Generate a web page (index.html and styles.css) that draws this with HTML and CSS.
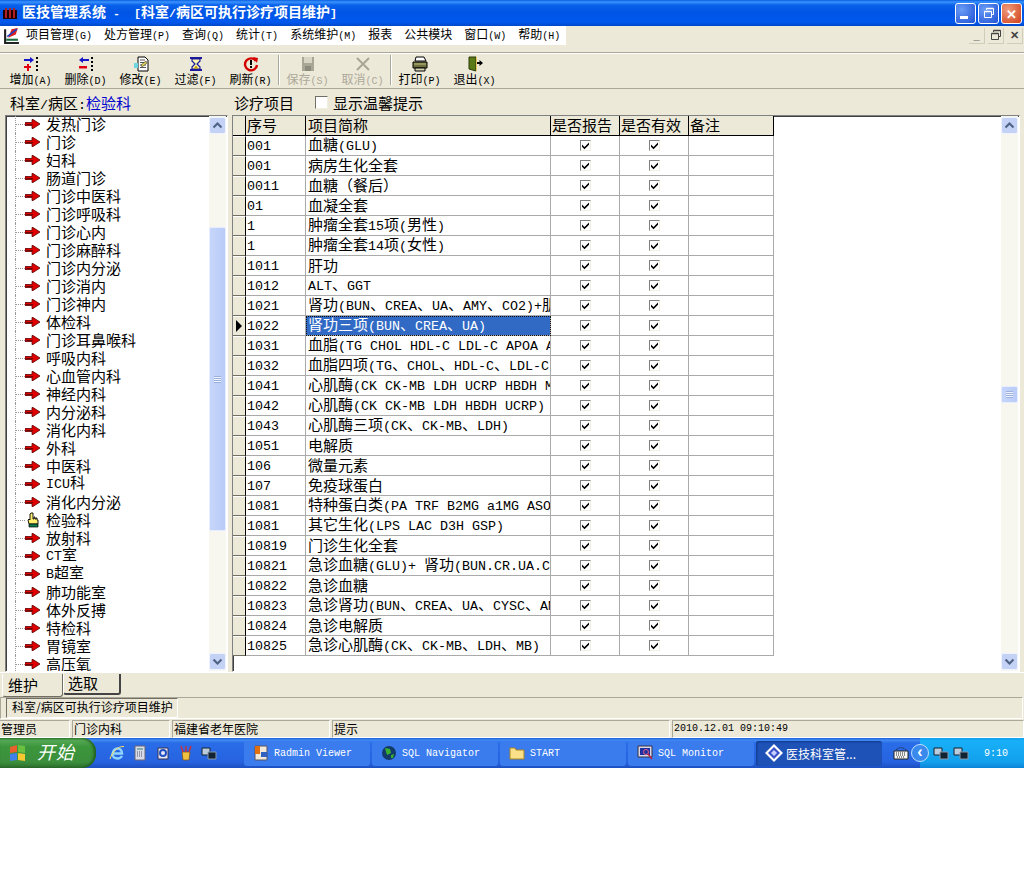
FILE: index.html
```html
<!DOCTYPE html>
<html lang="zh">
<head>
<meta charset="utf-8">
<title>医技管理系统</title>
<link rel="stylesheet" href="styles.css">
</head>
<body>
<svg class="sprite" aria-hidden="true">
  <symbol id="arrow" viewBox="0 0 16 12"><path d="M0 4.500h7V1.500l1 0 7 4.500-7 4.500-1 0V7.500H0z" fill="#e00000" stroke="#5a0000" stroke-width=".8"/><path d="M1 6.500h7" stroke="#700" stroke-width="1"/></symbol>
  <symbol id="hand" viewBox="0 0 14 16"><path d="M5 1h2v6h1V5h1v2h1V6h1v2h1v4H3l-1-4 1-1 1 1V2z" fill="#ffef70" stroke="#000" stroke-width=".9"/><path d="M3 12h9v3H3z" fill="#0a7a4a" stroke="#000" stroke-width=".7"/></symbol>
  <symbol id="check" viewBox="0 0 9 9"><path d="M1 3.500l2.500 2.500L8 1.500v2.200L3.500 8.200 1 5.700z" fill="#000"/></symbol>
  <symbol id="up" viewBox="0 0 17 17"><rect x=".5" y=".5" width="16" height="16" rx="2" fill="#c3d2f5" stroke="#eef3ff"/><path d="M4.500 10.500L8.500 6.500l4 4" fill="none" stroke="#4d6185" stroke-width="2"/></symbol>
  <symbol id="down" viewBox="0 0 17 17"><rect x=".5" y=".5" width="16" height="16" rx="2" fill="#c3d2f5" stroke="#eef3ff"/><path d="M4.500 6.500l4 4 4-4" fill="none" stroke="#4d6185" stroke-width="2"/></symbol>
  <symbol id="add" viewBox="0 0 16 16"><path d="M1 3h6V1l4 3-4 3V5H1z" fill="#1414c8"/><path d="M4 8h2v2h2v2H6v3H4v-3H1v-2h3z" fill="#e00010"/><path d="M13 1h2v2h-2zM13 5h2v2h-2zM13 9h2v2h-2zM13 13h2v2h-2z" fill="#000"/></symbol>
  <symbol id="del" viewBox="0 0 16 16"><path d="M11 3H5V1L1 4l4 3V5h6z" fill="#1414c8"/><path d="M1 10h8v2.500H1z" fill="#e00010"/><path d="M13 1h2v2h-2zM13 5h2v2h-2zM13 9h2v2h-2zM13 13h2v2h-2z" fill="#000"/></symbol>
  <symbol id="edit" viewBox="0 0 16 16"><path d="M5 1h7l3 3v11H5z" fill="#fff" stroke="#000"/><path d="M7 4h5M7 6.500h6M7 9h6M7 11.500h6" stroke="#555"/><path d="M1 7h4v5H1z" fill="#6fd6e0"/><path d="M8 9l5-4 1 2-5 4z" fill="#e8d850" stroke="#333" stroke-width=".6"/></symbol>
  <symbol id="filter" viewBox="0 0 16 16"><path d="M2 1h12v2H2zM2 13h12v2H2z" fill="#1a1a9a"/><path d="M4 3h8v2L9 8l3 3v2H4v-2l3-3-3-3z" fill="#fff8b0" stroke="#1a1a9a" stroke-width="1.200"/><path d="M5.500 12.500L8 9.500l2.500 3z" fill="#c8a000"/></symbol>
  <symbol id="refresh" viewBox="0 0 16 16"><path d="M13 5A6 6 0 1 0 14 9" fill="none" stroke="#d40000" stroke-width="2.400"/><path d="M10 1l5 1-1 5z" fill="#d40000"/><path d="M7 4h2v5H7zM7 10h2v2H7z" fill="#000"/></symbol>
  <symbol id="save" viewBox="0 0 16 16"><path d="M2 1h12v14H2z" fill="#a8a695"/><path d="M4 1h8v6H4z" fill="#d8d5c4"/><path d="M5 10h6v5H5z" fill="#8c8a7c"/></symbol>
  <symbol id="cancel" viewBox="0 0 16 16"><path d="M2 2l12 12M14 2L2 14" stroke="#a8a695" stroke-width="2"/></symbol>
  <symbol id="print" viewBox="0 0 16 16"><path d="M4 1h8l2 4H3z" fill="#fff" stroke="#000"/><path d="M1 6h14v6H1z" fill="#6e7040" stroke="#000"/><path d="M3 12h10v3H3z" fill="#d9d6b8" stroke="#000"/><path d="M2 8h12" stroke="#c0c080"/></symbol>
  <symbol id="exit" viewBox="0 0 16 16"><path d="M2 1h7v14l-7-2z" fill="#5b7a18" stroke="#2c3a08"/><path d="M9 1h1v14H9z" fill="#e8c860"/><path d="M10 6h2.500V4L16 7l-3.500 3V8H10z" fill="#000"/></symbol>
  <symbol id="appicon" viewBox="0 0 14 14"><path d="M0 4h14v9H0z" fill="#200"/><path d="M2 2h2v10H2zM6 2h2v10H6zM10 2h2v10h-2z" fill="#b02020"/></symbol>
  <symbol id="menuicon" viewBox="0 0 16 16"><path d="M1 2h2v12h12v2H1z" fill="#222"/><path d="M3 11h11v2H3z" fill="#1c6a3c"/><path d="M5 10l3-8 6-1-2 6z" fill="#e02020"/><path d="M4 9l9-7" stroke="#2040c0" stroke-width="1.500"/></symbol>
  <symbol id="restore" viewBox="0 0 12 12"><path d="M3.500 3V1.500h7v6H9" fill="none" stroke="currentColor"/><path d="M3.500 1.500h7" stroke="currentColor" stroke-width="1.500"/><path d="M1.500 4.500h7v6h-7z" fill="none" stroke="currentColor"/><path d="M1.500 4.500h7" stroke="currentColor" stroke-width="1.500"/></symbol>
  <symbol id="ie" viewBox="0 0 16 16"><path d="M3.500 8.500h9.500C13 5.500 11 3.500 8.500 3.500S3.500 6 3.500 9s2 4.500 5 4.500c2 0 3.500-.8 4.500-2.500" fill="none" stroke="#8fd4ff" stroke-width="2.400"/><path d="M1 14C3 7 9 1 15 1.500" fill="none" stroke="#ffe060" stroke-width="1"/></symbol>
  <symbol id="calc" viewBox="0 0 16 16"><path d="M3 1h10v14H3z" fill="#d8dce8" stroke="#667"/><path d="M5 3h6v2H5z" fill="#8aa"/><path d="M5 7h6M5 9h6M5 11h6" stroke="#556" stroke-dasharray="1 1"/></symbol>
  <symbol id="pencil" viewBox="0 0 16 16"><path d="M3 3h10v11H3z" fill="#e8e8f8" stroke="#335"/><circle cx="8" cy="8" r="3" fill="none" stroke="#2050c0" stroke-width="2"/></symbol>
  <symbol id="cup" viewBox="0 0 16 16"><path d="M4 7h8l-1 8H5z" fill="#f0c040" stroke="#805010" stroke-width=".7"/><path d="M5 7L3 1M8 7V1M11 7l2-6" stroke="#d03030" stroke-width="1.400"/></symbol>
  <symbol id="net" viewBox="0 0 16 16"><path d="M1 3h8v7H1z" fill="#bcd" stroke="#123"/><path d="M7 7h8v7H7z" fill="#123" stroke="#89a"/></symbol>
  <symbol id="radmin" viewBox="0 0 16 16"><path d="M2 1h12v14H2z" fill="#f0e8d8" stroke="#556"/><path d="M2 1h5v8H2z" fill="#e07010"/><path d="M8 7h6v5H8z" fill="#3060c0"/></symbol>
  <symbol id="globe" viewBox="0 0 16 16"><circle cx="8" cy="8" r="7" fill="#123a6a"/><path d="M4 3l5 1 1 4-4 2-1-3zM10 10l3-1-1 4-2 0z" fill="#38b030"/></symbol>
  <symbol id="folder" viewBox="0 0 16 16"><path d="M1 3h5l1 2h8v9H1z" fill="#fbe08a" stroke="#a88420"/></symbol>
  <symbol id="monitor" viewBox="0 0 16 16"><path d="M1 1h14v11H1z" fill="#d8d8e8" stroke="#334"/><path d="M3 3h10v7H3z" fill="#2030a0"/><circle cx="9" cy="7" r="2.500" fill="none" stroke="#e06080"/><path d="M11 9l4 5" stroke="#c02040" stroke-width="1.500"/></symbol>
  <symbol id="diamond" viewBox="0 0 18 18"><path d="M9 0l9 9-9 9-9-9z" fill="#fff"/><path d="M9 3l6 6-6 6-6-6z" fill="#3a50c8"/><path d="M9 6l3 3-3 3-3-3z" fill="#c8d0ff"/></symbol>
  <symbol id="kbd" viewBox="0 0 16 16"><path d="M1 6h14v8H1z" fill="#f4f4f4" stroke="#222"/><path d="M3 8h10M3 10h10M4 12h8" stroke="#222" stroke-dasharray="1 1"/><path d="M3 5c2-3 8-3 10 0" fill="none" stroke="#222" stroke-dasharray="1 1"/></symbol>
  <symbol id="flag" viewBox="0 0 18 18"><path d="M1 3l7-2v7l-7 1z" fill="#e8602c"/><path d="M9 1l7 1v7l-7-1z" fill="#6cc040"/><path d="M1 10l7-1v7l-7 1z" fill="#4080e8"/><path d="M9 9l7 1v7l-7-1z" fill="#f8c830"/></symbol>
</svg>

<div class="app">
  <header class="titlebar">
    <svg class="i14"><use href="#appicon"/></svg>
    <h1 class="title">医技管理系统<span class="tm"> -  [</span>科室<span class="tm">/</span>病区可执行诊疗项目维护<span class="tm">]</span></h1>
    <div class="winbtns">
      <button class="wb"><span class="wb-min"></span></button>
      <button class="wb"><svg class="i12"><use href="#restore"/></svg></button>
      <button class="wb wb-close">✕</button>
    </div>
  </header>

  <nav class="menubar">
    <div class="menustrip">
      <svg class="menuicon"><use href="#menuicon"/></svg>
      <span class="mi">项目管理<small>(G)</small></span>
      <span class="mi">处方管理<small>(P)</small></span>
      <span class="mi">查询<small>(Q)</small></span>
      <span class="mi">统计<small>(T)</small></span>
      <span class="mi">系统维护<small>(M)</small></span>
      <span class="mi">报表</span>
      <span class="mi">公共模块</span>
      <span class="mi">窗口<small>(W)</small></span>
      <span class="mi">帮助<small>(H)</small></span>
    </div>
    <div class="mdibtns">
      <span class="mdi">_</span><span class="mdi"><svg class="i12"><use href="#restore"/></svg></span><span class="mdi">✕</span>
    </div>
  </nav>

  <div class="band"></div>
  <div class="toolbar">
    <button class="tb"><svg class="i16"><use href="#add"/></svg><span>增加<small>(A)</small></span></button>
    <button class="tb"><svg class="i16"><use href="#del"/></svg><span>删除<small>(D)</small></span></button>
    <button class="tb"><svg class="i16"><use href="#edit"/></svg><span>修改<small>(E)</small></span></button>
    <button class="tb"><svg class="i16"><use href="#filter"/></svg><span>过滤<small>(F)</small></span></button>
    <button class="tb"><svg class="i16"><use href="#refresh"/></svg><span>刷新<small>(R)</small></span></button>
    <i class="sep"></i>
    <button class="tb off"><svg class="i16"><use href="#save"/></svg><span>保存<small>(S)</small></span></button>
    <button class="tb off"><svg class="i16"><use href="#cancel"/></svg><span>取消<small>(C)</small></span></button>
    <i class="sep"></i>
    <button class="tb"><svg class="i16"><use href="#print"/></svg><span>打印<small>(P)</small></span></button>
    <button class="tb"><svg class="i16"><use href="#exit"/></svg><span>退出<small>(X)</small></span></button>
  </div>

  <div class="labels">
    <div class="lab-left">科室<span class="m">/</span>病区<span class="m">:</span><b class="cur">检验科</b></div>
    <div class="lab-right">诊疗项目<i class="cb0"></i>显示温馨提示</div>
  </div>

  <main class="panes">
    <section class="tree">
      <ul class="nodes">
        <li><i class="stem"></i><svg class="arr"><use href="#arrow"/></svg>发热门诊</li>
        <li><i class="stem"></i><svg class="arr"><use href="#arrow"/></svg>门诊</li>
        <li><i class="stem"></i><svg class="arr"><use href="#arrow"/></svg>妇科</li>
        <li><i class="stem"></i><svg class="arr"><use href="#arrow"/></svg>肠道门诊</li>
        <li><i class="stem"></i><svg class="arr"><use href="#arrow"/></svg>门诊中医科</li>
        <li><i class="stem"></i><svg class="arr"><use href="#arrow"/></svg>门诊呼吸科</li>
        <li><i class="stem"></i><svg class="arr"><use href="#arrow"/></svg>门诊心内</li>
        <li><i class="stem"></i><svg class="arr"><use href="#arrow"/></svg>门诊麻醉科</li>
        <li><i class="stem"></i><svg class="arr"><use href="#arrow"/></svg>门诊内分泌</li>
        <li><i class="stem"></i><svg class="arr"><use href="#arrow"/></svg>门诊消内</li>
        <li><i class="stem"></i><svg class="arr"><use href="#arrow"/></svg>门诊神内</li>
        <li><i class="stem"></i><svg class="arr"><use href="#arrow"/></svg>体检科</li>
        <li><i class="stem"></i><svg class="arr"><use href="#arrow"/></svg>门诊耳鼻喉科</li>
        <li><i class="stem"></i><svg class="arr"><use href="#arrow"/></svg>呼吸内科</li>
        <li><i class="stem"></i><svg class="arr"><use href="#arrow"/></svg>心血管内科</li>
        <li><i class="stem"></i><svg class="arr"><use href="#arrow"/></svg>神经内科</li>
        <li><i class="stem"></i><svg class="arr"><use href="#arrow"/></svg>内分泌科</li>
        <li><i class="stem"></i><svg class="arr"><use href="#arrow"/></svg>消化内科</li>
        <li><i class="stem"></i><svg class="arr"><use href="#arrow"/></svg>外科</li>
        <li><i class="stem"></i><svg class="arr"><use href="#arrow"/></svg>中医科</li>
        <li><i class="stem"></i><svg class="arr"><use href="#arrow"/></svg><span><span class="m">ICU</span>科</span></li>
        <li><i class="stem"></i><svg class="arr"><use href="#arrow"/></svg>消化内分泌</li>
        <li><i class="stem"></i><svg class="handi"><use href="#hand"/></svg>检验科</li>
        <li><i class="stem"></i><svg class="arr"><use href="#arrow"/></svg>放射科</li>
        <li><i class="stem"></i><svg class="arr"><use href="#arrow"/></svg><span><span class="m">CT</span>室</span></li>
        <li><i class="stem"></i><svg class="arr"><use href="#arrow"/></svg><span><span class="m">B</span>超室</span></li>
        <li><i class="stem"></i><svg class="arr"><use href="#arrow"/></svg>肺功能室</li>
        <li><i class="stem"></i><svg class="arr"><use href="#arrow"/></svg>体外反搏</li>
        <li><i class="stem"></i><svg class="arr"><use href="#arrow"/></svg>特检科</li>
        <li><i class="stem"></i><svg class="arr"><use href="#arrow"/></svg>胃镜室</li>
        <li><i class="stem"></i><svg class="arr"><use href="#arrow"/></svg>高压氧</li>
      </ul>
      <div class="vscroll">
        <svg class="sb"><use href="#up"/></svg>
        <div class="track"><div class="thumb thumb-tree"><span class="grip"></span></div></div>
        <svg class="sb"><use href="#down"/></svg>
      </div>
    </section>

    <section class="gridbox">
      <div class="gridwrap">
      <table class="grid">
        <colgroup><col class="c0"><col class="c1"><col class="c2"><col class="c3"><col class="c3"><col class="c4"></colgroup>
        <thead><tr><th></th><th>序号</th><th>项目简称</th><th>是否报告</th><th>是否有效</th><th>备注</th></tr></thead>
        <tbody>
          <tr><th></th><td class="m">001</td><td>血糖<span class="m">(GLU)</span></td><td class="ck"><i class="cb"><svg><use href="#check"/></svg></i></td><td class="ck"><i class="cb"><svg><use href="#check"/></svg></i></td><td></td></tr>
          <tr><th></th><td class="m">001</td><td>病房生化全套</td><td class="ck"><i class="cb"><svg><use href="#check"/></svg></i></td><td class="ck"><i class="cb"><svg><use href="#check"/></svg></i></td><td></td></tr>
          <tr><th></th><td class="m">0011</td><td>血糖（餐后）</td><td class="ck"><i class="cb"><svg><use href="#check"/></svg></i></td><td class="ck"><i class="cb"><svg><use href="#check"/></svg></i></td><td></td></tr>
          <tr><th></th><td class="m">01</td><td>血凝全套</td><td class="ck"><i class="cb"><svg><use href="#check"/></svg></i></td><td class="ck"><i class="cb"><svg><use href="#check"/></svg></i></td><td></td></tr>
          <tr><th></th><td class="m">1</td><td>肿瘤全套<span class="m">15</span>项<span class="m">(</span>男性<span class="m">)</span></td><td class="ck"><i class="cb"><svg><use href="#check"/></svg></i></td><td class="ck"><i class="cb"><svg><use href="#check"/></svg></i></td><td></td></tr>
          <tr><th></th><td class="m">1</td><td>肿瘤全套<span class="m">14</span>项<span class="m">(</span>女性<span class="m">)</span></td><td class="ck"><i class="cb"><svg><use href="#check"/></svg></i></td><td class="ck"><i class="cb"><svg><use href="#check"/></svg></i></td><td></td></tr>
          <tr><th></th><td class="m">1011</td><td>肝功</td><td class="ck"><i class="cb"><svg><use href="#check"/></svg></i></td><td class="ck"><i class="cb"><svg><use href="#check"/></svg></i></td><td></td></tr>
          <tr><th></th><td class="m">1012</td><td><span class="m">ALT</span>、<span class="m">GGT</span></td><td class="ck"><i class="cb"><svg><use href="#check"/></svg></i></td><td class="ck"><i class="cb"><svg><use href="#check"/></svg></i></td><td></td></tr>
          <tr><th></th><td class="m">1021</td><td>肾功<span class="m">(BUN</span>、<span class="m">CREA</span>、<span class="m">UA</span>、<span class="m">AMY</span>、<span class="m">CO2)+</span>肌酐</td><td class="ck"><i class="cb"><svg><use href="#check"/></svg></i></td><td class="ck"><i class="cb"><svg><use href="#check"/></svg></i></td><td></td></tr>
          <tr><th class="ind"><i class="tri"></i></th><td class="m">1022</td><td class="sel">肾功三项<span class="m">(BUN</span>、<span class="m">CREA</span>、<span class="m">UA)</span></td><td class="ck"><i class="cb"><svg><use href="#check"/></svg></i></td><td class="ck"><i class="cb"><svg><use href="#check"/></svg></i></td><td></td></tr>
          <tr><th></th><td class="m">1031</td><td>血脂<span class="m">(TG CHOL HDL-C LDL-C APOA APOB)</span></td><td class="ck"><i class="cb"><svg><use href="#check"/></svg></i></td><td class="ck"><i class="cb"><svg><use href="#check"/></svg></i></td><td></td></tr>
          <tr><th></th><td class="m">1032</td><td>血脂四项<span class="m">(TG</span>、<span class="m">CHOL</span>、<span class="m">HDL-C</span>、<span class="m">LDL-C)</span></td><td class="ck"><i class="cb"><svg><use href="#check"/></svg></i></td><td class="ck"><i class="cb"><svg><use href="#check"/></svg></i></td><td></td></tr>
          <tr><th></th><td class="m">1041</td><td>心肌酶<span class="m">(CK CK-MB LDH UCRP HBDH MB)</span></td><td class="ck"><i class="cb"><svg><use href="#check"/></svg></i></td><td class="ck"><i class="cb"><svg><use href="#check"/></svg></i></td><td></td></tr>
          <tr><th></th><td class="m">1042</td><td>心肌酶<span class="m">(CK CK-MB LDH HBDH UCRP)</span></td><td class="ck"><i class="cb"><svg><use href="#check"/></svg></i></td><td class="ck"><i class="cb"><svg><use href="#check"/></svg></i></td><td></td></tr>
          <tr><th></th><td class="m">1043</td><td>心肌酶三项<span class="m">(CK</span>、<span class="m">CK-MB</span>、<span class="m">LDH)</span></td><td class="ck"><i class="cb"><svg><use href="#check"/></svg></i></td><td class="ck"><i class="cb"><svg><use href="#check"/></svg></i></td><td></td></tr>
          <tr><th></th><td class="m">1051</td><td>电解质</td><td class="ck"><i class="cb"><svg><use href="#check"/></svg></i></td><td class="ck"><i class="cb"><svg><use href="#check"/></svg></i></td><td></td></tr>
          <tr><th></th><td class="m">106</td><td>微量元素</td><td class="ck"><i class="cb"><svg><use href="#check"/></svg></i></td><td class="ck"><i class="cb"><svg><use href="#check"/></svg></i></td><td></td></tr>
          <tr><th></th><td class="m">107</td><td>免疫球蛋白</td><td class="ck"><i class="cb"><svg><use href="#check"/></svg></i></td><td class="ck"><i class="cb"><svg><use href="#check"/></svg></i></td><td></td></tr>
          <tr><th></th><td class="m">1081</td><td>特种蛋白类<span class="m">(PA TRF B2MG a1MG ASO)</span></td><td class="ck"><i class="cb"><svg><use href="#check"/></svg></i></td><td class="ck"><i class="cb"><svg><use href="#check"/></svg></i></td><td></td></tr>
          <tr><th></th><td class="m">1081</td><td>其它生化<span class="m">(LPS LAC D3H GSP)</span></td><td class="ck"><i class="cb"><svg><use href="#check"/></svg></i></td><td class="ck"><i class="cb"><svg><use href="#check"/></svg></i></td><td></td></tr>
          <tr><th></th><td class="m">10819</td><td>门诊生化全套</td><td class="ck"><i class="cb"><svg><use href="#check"/></svg></i></td><td class="ck"><i class="cb"><svg><use href="#check"/></svg></i></td><td></td></tr>
          <tr><th></th><td class="m">10821</td><td>急诊血糖<span class="m">(GLU)+ </span>肾功<span class="m">(BUN.CR.UA.CO2)</span></td><td class="ck"><i class="cb"><svg><use href="#check"/></svg></i></td><td class="ck"><i class="cb"><svg><use href="#check"/></svg></i></td><td></td></tr>
          <tr><th></th><td class="m">10822</td><td>急诊血糖</td><td class="ck"><i class="cb"><svg><use href="#check"/></svg></i></td><td class="ck"><i class="cb"><svg><use href="#check"/></svg></i></td><td></td></tr>
          <tr><th></th><td class="m">10823</td><td>急诊肾功<span class="m">(BUN</span>、<span class="m">CREA</span>、<span class="m">UA</span>、<span class="m">CYSC</span>、<span class="m">AMY)</span></td><td class="ck"><i class="cb"><svg><use href="#check"/></svg></i></td><td class="ck"><i class="cb"><svg><use href="#check"/></svg></i></td><td></td></tr>
          <tr><th></th><td class="m">10824</td><td>急诊电解质</td><td class="ck"><i class="cb"><svg><use href="#check"/></svg></i></td><td class="ck"><i class="cb"><svg><use href="#check"/></svg></i></td><td></td></tr>
          <tr><th></th><td class="m">10825</td><td>急诊心肌酶<span class="m">(CK</span>、<span class="m">CK-MB</span>、<span class="m">LDH</span>、<span class="m">MB)</span></td><td class="ck"><i class="cb"><svg><use href="#check"/></svg></i></td><td class="ck"><i class="cb"><svg><use href="#check"/></svg></i></td><td></td></tr>
        </tbody>
      </table>
      </div>
      <div class="vscroll">
        <svg class="sb"><use href="#up"/></svg>
        <div class="track"><div class="thumb thumb-grid"><span class="grip"></span></div></div>
        <svg class="sb"><use href="#down"/></svg>
      </div>
    </section>
  </main>

  <div class="tabs">
    <span class="tab tab-on">维护</span>
    <span class="tab tab-off">选取</span>
  </div>

  <div class="formbar"><span class="formtab">科室/病区可执行诊疗项目维护</span></div>

  <footer class="status">
    <span class="st st1">管理员</span>
    <span class="st st2">门诊内科</span>
    <span class="st st3">福建省老年医院</span>
    <span class="st st4">提示</span>
    <span class="st st5">2010.12.01 09:10:49</span>
  </footer>

  <div class="taskbar">
    <div class="start"><svg class="flag"><use href="#flag"/></svg><em>开始</em></div>
    <div class="quick">
      <svg class="i16"><use href="#ie"/></svg>
      <svg class="i16"><use href="#calc"/></svg>
      <svg class="i16"><use href="#pencil"/></svg>
      <svg class="i16"><use href="#cup"/></svg>
      <svg class="i16"><use href="#net"/></svg>
    </div>
    <div class="tasks">
      <span class="task"><svg class="i16"><use href="#radmin"/></svg>Radmin Viewer</span>
      <span class="task"><svg class="i16"><use href="#globe"/></svg>SQL Navigator</span>
      <span class="task"><svg class="i16"><use href="#folder"/></svg>START</span>
      <span class="task"><svg class="i16"><use href="#monitor"/></svg>SQL Monitor</span>
      <span class="task task-on"><svg class="i18"><use href="#diamond"/></svg>医技科室管...</span>
    </div>
    <svg class="kbd"><use href="#kbd"/></svg>
    <div class="tray">
      <span class="chev">‹</span>
      <svg class="i16"><use href="#net"/></svg>
      <svg class="i16"><use href="#net"/></svg>
      <span class="clock">9:10</span>
    </div>
  </div>
</div>
</body>
</html>
```
FILE: styles.css
```css
* { box-sizing: border-box; }
html, body { margin: 0; padding: 0; background: #fff; }
body { font: 15px "Noto Sans CJK SC", sans-serif; color: #000; }
.sprite { display: none; }
svg { display: block; flex: none; }
button { font: inherit; padding: 0; border: 0; background: none; color: inherit; }
ul { list-style: none; margin: 0; padding: 0; }
small { font: 10px/1 "Liberation Mono", monospace; }
i, em { font-style: normal; }
.m { font-family: "Liberation Mono", monospace; font-size: 13.33px; line-height: 1; }

.i12 { width: 12px; height: 12px; }
.i14 { width: 14px; height: 14px; }
.i16 { width: 16px; height: 16px; }
.i18 { width: 18px; height: 18px; }

.app { width: 1024px; height: 768px; background: #ece9d8; display: flex; flex-direction: column; overflow: hidden; }

.titlebar {
  height: 26px; flex: none; display: flex; align-items: center; padding: 0 2px 0 3px;
  background: linear-gradient(#0a5ee0 0, #3a93ff 2px, #0a62ea 5px, #0055e5 12px, #0058ee 22px, #0048c8 26px);
}
.title { margin: 0 0 0 5px; font-size: 14px; font-weight: 700; color: #fff; white-space: pre; flex: 1; line-height: 22px; height: 26px; }
.tm { font: 700 11.67px/1 "Liberation Mono", monospace; }
.winbtns { display: flex; gap: 2px; }
.wb { width: 21px; height: 21px; border: 1px solid #fff; border-radius: 3px; background: radial-gradient(circle at 30% 30%, #6a9cf5, #1f51d6); color: #fff; display: flex; align-items: center; justify-content: center; }
.wb-close { background: radial-gradient(circle at 30% 30%, #f09a7a, #d0401a); font-size: 13px; font-weight: 700; }
.wb-min { width: 8px; height: 3px; background: #fff; margin-top: 8px; margin-right: 4px; }

.menubar { height: 19px; flex: none; display: flex; justify-content: space-between; }
.menustrip { display: flex; align-items: center; background: #fff; height: 19px; width: 566px; padding-left: 20px; }
.menuicon { width: 17px; height: 17px; margin-left: -17px; }
.mi { font-size: 12px; padding: 0 6px 4px; white-space: nowrap; line-height: 15px; }
.mdibtns { display: flex; gap: 3px; padding-right: 1px; align-items: center; }
.mdi { width: 16px; height: 16px; font: 700 11px/14px "Liberation Sans", sans-serif; color: #444; display: flex; align-items: center; justify-content: center; border-right: 1px solid #d0cdbb; border-bottom: 1px solid #d0cdbb; }

.band { height: 8px; flex: none; border-bottom: 1px solid #aca899; }
.toolbar { height: 36px; flex: none; display: flex; padding-left: 3px; border-top: 1px solid #fff; border-bottom: 1px solid #aca899; }
.tb { width: 55px; display: flex; flex-direction: column; align-items: center; font-size: 12px; line-height: 14px; padding-top: 2px; }
.tb span { white-space: nowrap; }
.tb.off { color: #aca899; }
.sep { width: 2px; margin: 1px 0 3px; border-left: 1px solid #aca899; border-right: 1px solid #fff; }

.labels { height: 26px; flex: none; display: flex; align-items: center; font-size: 15px; }
.lab-left { width: 234px; padding-left: 10px; }
.cur { font-weight: 400; color: #0000d0; }
.lab-right { display: flex; align-items: center; }
.cb0 { width: 13px; height: 13px; margin: 0 5px 0 21px; background: #fff; border: 1px solid; border-color: #716f64 #f1efe2 #f1efe2 #716f64; }

.panes { height: 557px; flex: none; display: flex; gap: 4px; padding-left: 5px; padding-right: 4px; }
.tree, .gridbox { display: flex; background: #fff; border: 1px solid; border-color: #808080 #fff #fff #808080; box-shadow: inset 1px 1px 0 #404040; height: 557px; overflow: hidden; }
.tree { width: 223px; padding: 0 1px; }
.gridbox { flex: 1; padding: 0 1px 0 0; }
.nodes { flex: 1; padding-left: 3px; overflow: hidden; min-width: 0; margin-top: -1px; }
.nodes li { height: 18px; line-height: 15px; padding-bottom: 2px; display: flex; align-items: center; white-space: pre; }
.stem { width: 10px; height: 18px; margin: 2px 0 0 5px; flex: none; border-left: 1px dotted #999; background: repeating-linear-gradient(90deg, #999 0 1px, transparent 1px 2px) center / 100% 1px no-repeat; }
.arr { width: 16px; height: 12px; margin: 2px 5px 0 0; }
.handi { width: 14px; height: 16px; margin: 2px 6px 0 1px; }

.vscroll { width: 17px; flex: none; display: flex; flex-direction: column; background: #f7f6ef; padding: 1px 0; }
.sb { width: 17px; height: 17px; }
.track { flex: 1; }
.thumb { width: 17px; background: linear-gradient(90deg, #c6d5fa, #b9cbf7); border: 1px solid #e6edff; border-radius: 2px; display: flex; align-items: center; justify-content: center; }
.thumb-tree { height: 304px; margin-top: 93px; }
.thumb-grid { height: 17px; margin-top: 252px; }
.grip { width: 7px; height: 7px; background: repeating-linear-gradient(#9cb0dc 0 1px, #eef3ff 1px 2px); }

.gridwrap { flex: 1; overflow: hidden; min-width: 0; }
.grid { table-layout: fixed; border-collapse: separate; border-spacing: 0; width: 541px; font-size: 15px; }
.c0 { width: 13px; } .c1 { width: 60px; } .c2 { width: 245px; } .c3 { width: 69px; } .c4 { width: 85px; }
.grid th, .grid td { height: 20px; padding: 0 0 1px 1px; line-height: 14px; overflow: hidden; white-space: nowrap; vertical-align: middle; }
.grid thead th { background: #ece9d8; font-weight: 400; text-align: left; border-right: 1px solid #000; border-bottom: 1px solid #000; }
.grid tbody th { background: #ece9d8; border-right: 1px solid #000; border-bottom: 1px solid #716f64; border-top: 1px solid #fff; padding: 0; }
.grid td { border-right: 1px solid #aaa; border-bottom: 1px solid #aaa; }
.grid tr > :nth-child(3) { padding-left: 2px; }
.grid td.m { font-size: 13.33px; line-height: 14px; padding: 2px 0 0 1px; }
.grid td.ck { padding: 0 0 1px; }
.cb { display: block; width: 11px; height: 11px; margin: 0 auto; background: #fff; border: 1px solid; border-color: #808080 #f1efe2 #f1efe2 #808080; }
.cb svg { width: 9px; height: 9px; }
.grid td.sel { background: #316ac5; color: #fff; outline: 1px dotted #111; outline-offset: -1px; }
.tri { display: block; width: 0; height: 0; margin-left: 3px; border-left: 6px solid #000; border-top: 6px solid transparent; border-bottom: 6px solid transparent; }

.tabs { height: 25px; flex: none; display: flex; padding: 1px 0 0 2px; align-items: flex-start; border-top: 1px solid #fff; }
.tab { display: block; }
.tab-on { width: 61px; height: 23px; padding: 1px 0 0 5px; line-height: 20px; border: 1px solid; border-color: transparent #716f64 #716f64 #fff; border-top: 0; border-radius: 0 0 3px 3px; }
.tab-off { width: 58px; height: 21px; padding: 0 0 0 4px; border: 1px solid; border-color: transparent #444 #444 #fff; border-width: 0 2px 2px 1px; line-height: 17px; border-radius: 0 0 3px 3px; }

.formbar { height: 22px; flex: none; margin: 0 1px 0 0; border: 1px solid; border-color: #aca899 #fff #fff #aca899; padding: 0 0 0 5px; display: flex; }
.formtab { font-size: 12px; line-height: 16px; padding: 0 5px 3px; width: 172px; border: 1px solid; border-color: #716f64 #fff #fff #716f64; white-space: nowrap; }

.status { height: 19px; flex: none; display: flex; font-size: 12px; padding-top: 1px; }
.st { line-height: 15px; padding: 0 0 2px 1px; border: 1px solid; border-color: #aca899 #fff #fff #aca899; margin-right: 2px; white-space: nowrap; }
.st1 { width: 70px; border-left: 0; } .st2 { width: 98px; } .st3 { width: 158px; } .st4 { width: 338px; } .st5 { flex: 1; margin: 0; font: 10px/15px "Liberation Mono", monospace; }

.taskbar { height: 30px; flex: none; display: flex; align-items: center; color: #fff; background: linear-gradient(#1f5bd8 0, #3f8cf3 2px, #2a6ce8 5px, #2663e0 24px, #1c4fc0 30px); }
.start { width: 96px; height: 30px; flex: none; display: flex; align-items: center; padding-left: 9px; border-radius: 0 14px 14px 0; background: linear-gradient(#3f8f3f, #54a854 8%, #3b963b 30%, #3c8f3c 80%, #2d6f2d); box-shadow: inset -2px 0 3px #1f5a1f; }
.flag { width: 18px; height: 18px; margin-right: 10px; }
.start em { font-size: 18px; font-style: italic; letter-spacing: 1px; line-height: 24px; padding-bottom: 4px; }
.quick { width: 148px; flex: none; display: flex; gap: 7px; padding-left: 13px; }
.tasks { display: flex; gap: 2px; width: 640px; flex: none; }
.task { width: 126px; height: 25px; flex: none; display: flex; align-items: center; gap: 5px; padding-left: 9px; border-radius: 3px; background: #3a7bee; font: 10px "Liberation Mono", monospace; white-space: nowrap; }
.task-on { font: 12px "Noto Sans CJK SC", sans-serif; background: #1e52b7; gap: 3px; box-shadow: inset 1px 1px 2px #123a88; }
.kbd { width: 16px; height: 16px; margin: 0 0 0 9px; }
.tray { flex: 1; height: 30px; margin-left: 11px; display: flex; align-items: center; gap: 4px; background: linear-gradient(#10a0ee 0, #18b0f8 3px, #12a0ec 24px, #0c84d8 30px); font: 10px "Liberation Mono", monospace; }
.chev { width: 18px; height: 18px; margin-left: -9px; border-radius: 50%; background: #3a8aee; border: 1px solid #bfe0ff; text-align: center; font: 700 16px/14px "Liberation Sans", sans-serif; }
.clock { margin-left: 11px; font-size: 10px; }
```
